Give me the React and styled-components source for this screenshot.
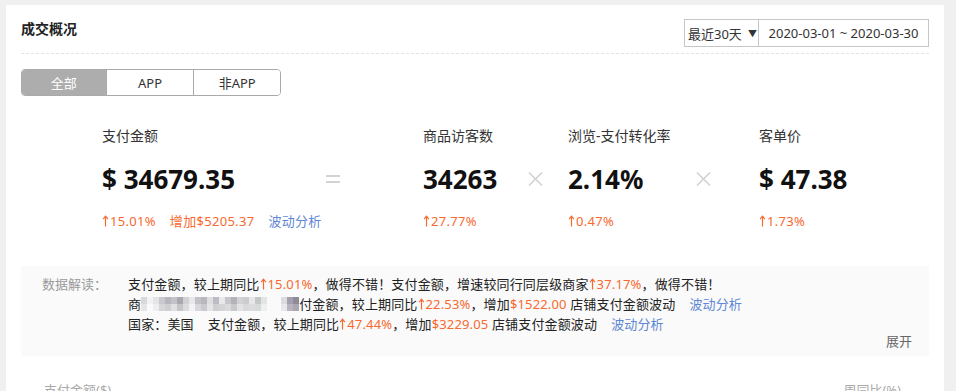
import React from "react";
import styled, { createGlobalStyle } from "styled-components";

const GlobalStyle = createGlobalStyle`
  body {
    margin: 0;
    background: #f0f0f0;
    font-family: "Noto Sans", "Noto Sans CJK SC", sans-serif;
    color: #333;
  }
`;

const ORANGE = "#f7692f";
const BLUE = "#5f87d3";

const Card = styled.div`
  margin: 5px 0 0 6px;
  width: 938px;
  height: 400px;
  background: #fff;
  padding: 0 15px;
  box-sizing: border-box;
`;

const Header = styled.div`
  display: flex;
  justify-content: space-between;
  align-items: flex-start;
  padding-top: 14px;
  height: 49px;
  box-sizing: border-box;
  border-bottom: 1px dashed #e3e3e3;
`;

const Title = styled.div`
  font-size: 14px;
  line-height: 20px;
  font-weight: 700;
  color: #222;
`;

const DateBox = styled.div`
  display: flex;
  height: 28px;
  border: 1px solid #c6c6c6;
  box-sizing: border-box;
  font-size: 13px;
`;

const RangeSelect = styled.div`
  display: flex;
  align-items: center;
  gap: 6px;
  width: 74px;
  padding-left: 3px;
  box-sizing: border-box;
  border-right: 1px solid #c6c6c6;
  color: #333;
`;

const Caret = styled.span`
  font-size: 9px;
  color: #333;
`;

const RangeText = styled.div`
  display: flex;
  align-items: center;
  justify-content: center;
  width: 169px;
  color: #333;
`;

const Tabs = styled.div`
  display: flex;
  margin-top: 15px;
  width: 260px;
  height: 27px;
  border: 1px solid #aaa;
  border-radius: 4px;
  overflow: hidden;
  box-sizing: border-box;
`;

const Tab = styled.div`
  display: flex;
  align-items: center;
  justify-content: center;
  width: ${(p) => p.$w}px;
  font-size: 13px;
  background: ${(p) => (p.$active ? "#adadad" : "#fff")};
  color: ${(p) => (p.$active ? "#fff" : "#333")};
  & + & {
    border-left: 1px solid #aaa;
  }
`;

const Metrics = styled.div`
  display: flex;
  padding-left: 81px;
  margin-top: 30px;
`;

const Metric = styled.div`
  width: ${(p) => (p.$w ? `${p.$w}px` : "auto")};
  display: flex;
  flex-direction: column;
`;

const Label = styled.div`
  font-size: 14px;
  line-height: 20px;
  color: #333;
`;

const Value = styled.div`
  margin-top: 15px;
  font-size: 26px;
  line-height: 36px;
  font-weight: 700;
  color: #111;
  white-space: nowrap;
`;

const Sub = styled.div`
  display: flex;
  gap: 14px;
  margin-top: 14px;
  font-size: 13px;
  line-height: 20px;
  letter-spacing: 0.3px;
  white-space: nowrap;
`;

const Up = styled.span`
  color: ${ORANGE};
  display: inline-flex;
  align-items: center;
`;

const Link = styled.span`
  color: ${BLUE};
`;

const Operator = styled.div`
  width: 26px;
  height: 36px;
  margin-top: 35px;
  margin-right: ${(p) => p.$mr}px;
  display: flex;
  align-items: center;
  justify-content: center;
`;

const Reading = styled.div`
  margin-top: 35px;
  background: #fafafa;
  padding: 8px 17px 8px 21px;
  font-size: 13px;
  line-height: 20px;
`;

const ReadingBody = styled.div`
  display: grid;
  grid-template-columns: 86px 1fr;
`;

const ReadingLabel = styled.div`
  color: #999;
`;

const Lines = styled.div`
  color: #222;
  white-space: nowrap;
  letter-spacing: 0.15px;
`;

const Line = styled.div`
  display: flex;
  align-items: center;
`;

const Gap = styled.span`
  display: inline-block;
  width: ${(p) => p.$w}px;
`;

const Expand = styled.div`
  text-align: right;
  line-height: 14px;
  color: #666;
`;

const Mosaic = styled.span`
  display: inline-grid;
  grid-template-rows: repeat(2, 7px);
  grid-auto-flow: column;
  grid-auto-columns: 6px;
  height: 14px;
  margin-left: ${(p) => p.$ml || 0}px;
`;

const Cell = styled.span`
  background: ${(p) => p.$c};
`;

const TableHead = styled.div`
  display: flex;
  justify-content: space-between;
  margin-top: 24px;
  padding: 0 28px 0 23px;
  font-size: 13px;
  line-height: 20px;
  color: #aaa;
`;

const Arrow = () => (
  <svg width="7" height="12" viewBox="0 0 7 12" style={{ marginRight: 1 }}>
    <path d="M3.5 1.5V11.5" stroke={ORANGE} strokeWidth="1.2" />
    <path d="M1.1 4.2L3.5 1.2L5.9 4.2" fill="none" stroke={ORANGE} strokeWidth="1.2" />
  </svg>
);

const Equals = () => (
  <svg width="14" height="10" viewBox="0 0 14 10">
    <rect x="0" y="1" width="14" height="2" fill="#d3d3d3" />
    <rect x="0" y="7" width="14" height="2" fill="#d3d3d3" />
  </svg>
);

const Times = () => (
  <svg width="15" height="14" viewBox="0 0 15 14">
    <path d="M1 0.5L14 13.5M14 0.5L1 13.5" stroke="#cfcfcf" strokeWidth="1.4" />
  </svg>
);

const Pct = ({ children }) => (
  <Up>
    <Arrow />
    {children}
  </Up>
);

// blurred merchant name, as a mosaic of grey blocks
const mosaicA = [
  "#d9d9dc", "#e6e6e8", "#f2f2f3", "#fafafa", "#e4e4e6", "#eeeef0",
  "#c9c8ce", "#d6d6d9", "#b7b5bd", "#cfced3", "#c3c2c8", "#e0dfe2",
  "#a9a7b0", "#c6c5ca", "#d1d1d4", "#dcdcdf", "#e8e8ea", "#f3f3f5",
  "#c2c1c6", "#d8d7db", "#b9b8be", "#cacad0", "#dedee1", "#e5e5e7",
  "#bcbbc1", "#cfcfd3", "#e9e9eb", "#d4d4d8", "#c7c6cc", "#dadadd",
  "#b4b3ba", "#c9c8cd", "#d2d2d6", "#e3e3e6", "#cccbd0", "#d9d9dc",
  "#e7e7e9", "#dcdcdf", "#c5c8c8", "#d6dada", "#e3e5e5", "#eef0f0",
];

const mosaicB = ["#dcdcdf", "#e8e8ea", "#a39fad", "#b8b5c0", "#8f8a9a", "#aaa6b3"];

const App = () => {
  return (
    <>
      <GlobalStyle />
      <Card>
        <Header>
          <Title>成交概况</Title>
          <DateBox>
            <RangeSelect>
              最近30天<Caret>▼</Caret>
            </RangeSelect>
            <RangeText>2020-03-01 ~ 2020-03-30</RangeText>
          </DateBox>
        </Header>

        <Tabs>
          <Tab $w={85} $active>全部</Tab>
          <Tab $w={88}>APP</Tab>
          <Tab $w={87}>非APP</Tab>
        </Tabs>

        <Metrics>
          <Metric $w={218}>
            <Label>支付金额</Label>
            <Value>$ 34679.35</Value>
            <Sub>
              <Pct>15.01%</Pct>
              <Up>增加$5205.37</Up>
              <Link>波动分析</Link>
            </Sub>
          </Metric>
          <Operator $mr={77}>
            <Equals />
          </Operator>
          <Metric $w={99}>
            <Label>商品访客数</Label>
            <Value>34263</Value>
            <Sub>
              <Pct>27.77%</Pct>
            </Sub>
          </Metric>
          <Operator $mr={20}>
            <Times />
          </Operator>
          <Metric $w={122}>
            <Label>浏览-支付转化率</Label>
            <Value>2.14%</Value>
            <Sub>
              <Pct>0.47%</Pct>
            </Sub>
          </Metric>
          <Operator $mr={43}>
            <Times />
          </Operator>
          <Metric>
            <Label>客单价</Label>
            <Value>$ 47.38</Value>
            <Sub>
              <Pct>1.73%</Pct>
            </Sub>
          </Metric>
        </Metrics>

        <Reading>
          <ReadingBody>
            <ReadingLabel>数据解读：</ReadingLabel>
            <Lines>
              <Line>
                支付金额，较上期同比<Pct>15.01%</Pct>，做得不错！支付金额，增速较同行同层级商家
                <Pct>37.17%</Pct>，做得不错！
              </Line>
              <Line>
                商
                <Mosaic>
                  {mosaicA.map((c, i) => (
                    <Cell key={i} $c={c} />
                  ))}
                </Mosaic>
                <Mosaic $ml={14}>
                  {mosaicB.map((c, i) => (
                    <Cell key={i} $c={c} />
                  ))}
                </Mosaic>
                付金额，较上期同比<Pct>22.53%</Pct>，增加<Up>$1522.00</Up>&nbsp;店铺支付金额波动
                <Gap $w={14} />
                <Link>波动分析</Link>
              </Line>
              <Line>
                国家：美国<Gap $w={14} />支付金额，较上期同比<Pct>47.44%</Pct>，增加
                <Up>$3229.05</Up>&nbsp;店铺支付金额波动<Gap $w={14} />
                <Link>波动分析</Link>
              </Line>
            </Lines>
          </ReadingBody>
          <Expand>展开</Expand>
        </Reading>

        <TableHead>
          <span>支付金额($)</span>
          <span>周同比(%)</span>
        </TableHead>
      </Card>
    </>
  );
};

export default App;
